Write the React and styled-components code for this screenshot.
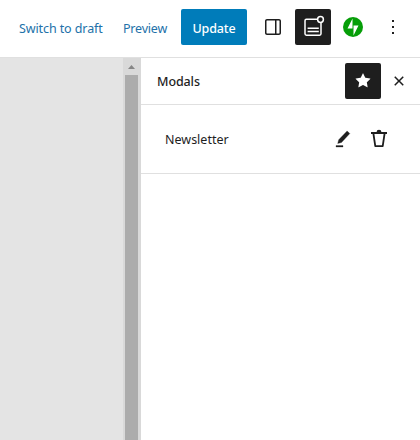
import React from 'react';
import styled, { createGlobalStyle } from 'styled-components';

const GlobalStyle = createGlobalStyle`
  * { box-sizing: border-box; }
  body {
    margin: 0;
    background: #fff;
    color: #1e1e1e;
    font-family: "Segoe UI", "Noto Sans", "Open Sans", sans-serif;
    font-size: 13px;
    overflow: hidden;
  }
`;

const Editor = styled.div`
  display: flex;
  flex-direction: column;
  width: 420px;
  height: 440px;
  overflow: hidden;
`;

const TopBar = styled.header`
  display: flex;
  align-items: center;
  flex: 0 0 58px;
  padding: 0 9px 3px 19px;
  border-bottom: 1px solid #e0e0e0;
`;

const LinkButton = styled.button`
  flex: none;
  width: ${(p) => p.$width}px;
  margin-right: ${(p) => p.$gap}px;
  padding: 3px 0 0;
  border: 0;
  background: none;
  color: #2271a9;
  font: 400 12.5px/20px "Segoe UI", "Noto Sans", sans-serif;
  letter-spacing: ${(p) => p.$tracking}px;
  text-align: left;
  white-space: nowrap;
`;

const PrimaryButton = styled.button`
  flex: none;
  width: 66px;
  height: 36px;
  margin-right: 8px;
  padding: 3px 0 0;
  border: 0;
  border-radius: 2px;
  background: #007cba;
  color: #fff;
  font: 500 12.5px/20px "Segoe UI", "Noto Sans", sans-serif;
  letter-spacing: -0.1px;
`;

const IconGroup = styled.div`
  display: flex;
  gap: ${(p) => p.$gap || 0}px;
`;

const IconButton = styled.button`
  display: flex;
  align-items: center;
  justify-content: center;
  flex: none;
  width: 36px;
  height: 36px;
  padding: 0;
  border: 0;
  border-radius: 2px;
  background: ${(p) => (p.$active ? '#1e1e1e' : 'transparent')};
  color: ${(p) => (p.$active ? '#fff' : '#1e1e1e')};
`;

const Glyph = styled.svg`
  display: block;
  width: 24px;
  height: 24px;
  fill: currentColor;
`;

const Workspace = styled.main`
  display: flex;
  flex: 1;
  min-height: 0;
`;

const Canvas = styled.div`
  flex: 0 0 123px;
  background: #e4e4e4;
`;

const Scrollbar = styled.div`
  display: flex;
  flex-direction: column;
  align-items: center;
  flex: 0 0 18px;
  padding-right: 1px;
  background: #d9d9d9;
`;

const ScrollArrow = styled.svg`
  flex: 0 0 17px;
  width: 17px;
  fill: #868686;
`;

const ScrollThumb = styled.div`
  flex: 1;
  width: 13px;
  background: #acacac;
`;

const Sidebar = styled.aside`
  flex: 1;
  background: #fff;
`;

const SidebarHeader = styled.div`
  display: flex;
  align-items: center;
  justify-content: space-between;
  height: 47px;
  padding: 0 3px 0 16px;
  border-bottom: 1px solid #e0e0e0;
`;

const Title = styled.h2`
  margin: 0;
  padding-top: 2px;
  font: 500 12.5px/20px "Segoe UI", "Noto Sans", sans-serif;
  letter-spacing: -0.1px;
`;

const ModalRow = styled.div`
  display: flex;
  align-items: center;
  justify-content: space-between;
  height: 69px;
  padding: 0 23px 0 24px;
  border-bottom: 1px solid #e0e0e0;
`;

const ModalName = styled.span`
  padding-top: 2px;
  font-size: 12.5px;
  line-height: 20px;
`;

const icons = {
  drawer:
    'M18 4H6c-1.1 0-2 .9-2 2v12c0 1.1.9 2 2 2h12c1.1 0 2-.9 2-2V6c0-1.1-.9-2-2-2zm-4 14.5H6c-.3 0-.5-.2-.5-.5V6c0-.3.2-.5.5-.5h8v13zm4.5-.5c0 .3-.2.5-.5.5h-2.5v-13H18c.3 0 .5.2.5.5v12z',
  more: 'M13 19h-2v-2h2v2zm0-6h-2v-2h2v2zm0-6h-2V5h2v2z',
  star: 'M11.776 4.454a.25.25 0 01.448 0l2.069 4.192a.25.25 0 00.188.137l4.626.672a.25.25 0 01.139.426l-3.348 3.263a.25.25 0 00-.072.222l.79 4.607a.25.25 0 01-.362.263l-4.138-2.175a.25.25 0 00-.232 0l-4.138 2.175a.25.25 0 01-.363-.263l.79-4.607a.25.25 0 00-.071-.222L4.754 9.881a.25.25 0 01.139-.426l4.626-.672a.25.25 0 00.188-.137l2.069-4.192z',
  close:
    'M12 13.06l3.712 3.713 1.061-1.06L13.061 12l3.712-3.712-1.06-1.06L12 10.938 8.288 7.227l-1.061 1.06L10.939 12l-3.712 3.712 1.06 1.061L12 13.061z',
};

const Icon = ({ name }) => (
  <Glyph viewBox="0 0 24 24" aria-hidden="true">
    <path d={icons[name]} />
  </Glyph>
);

const EditIcon = () => (
  <Glyph viewBox="0 0 24 24" aria-hidden="true">
    <path
      d="m18.8 6.6-2.7-2.7-8.4 8.8-1 3.8 3.8-1zM5 18.6h7V20H5z"
      stroke="currentColor"
      strokeWidth="0.3"
    />
  </Glyph>
);

const TrashIcon = () => (
  <Glyph viewBox="0 0 24 24" aria-hidden="true">
    <path d="M4 4.9h5.6a2.4 2.1 0 0 1 4.8 0H20V7H4z" />
    <path
      d="m6.4 6.5 1.8 12.2q.1.5.7.5h6.2q.6 0 .7-.5l1.8-12.2"
      fill="none"
      stroke="currentColor"
      strokeWidth="1.8"
    />
  </Glyph>
);

const ModalIcon = () => (
  <Glyph viewBox="0 0 24 24" aria-hidden="true">
    <g fill="none" stroke="currentColor" strokeWidth="1.5">
      <path d="M16.2 4.3H5.4Q4 4.3 4 5.7v13.1q0 1.4 1.4 1.4h13.2q1.4 0 1.4-1.4V8" />
      <path d="M6.6 13.3h11.2M6.6 16.5h11.2" />
      <circle cx="19.5" cy="4.5" r="2.9" />
    </g>
  </Glyph>
);

const JetpackIcon = () => (
  <Glyph viewBox="0 0 24 24" aria-hidden="true">
    <circle cx="12" cy="12" r="10" fill="#069e08" />
    <path d="M11.5 3.6v10H6.5zM12.5 20.4v-10h5z" fill="#fff" />
  </Glyph>
);

export default function App() {
  return (
    <>
      <GlobalStyle />
      <Editor>
        <TopBar>
          <LinkButton $width={84} $gap={20} $tracking={-0.1}>Switch to draft</LinkButton>
          <LinkButton $width={44} $gap={14} $tracking={-0.2}>Preview</LinkButton>
          <PrimaryButton>Update</PrimaryButton>
          <IconGroup $gap={4}>
            <IconButton aria-label="Settings"><Icon name="drawer" /></IconButton>
            <IconButton $active aria-label="Modals"><ModalIcon /></IconButton>
            <IconButton aria-label="Jetpack"><JetpackIcon /></IconButton>
            <IconButton aria-label="Options"><Icon name="more" /></IconButton>
          </IconGroup>
        </TopBar>
        <Workspace>
          <Canvas />
          <Scrollbar>
            <ScrollArrow viewBox="0 0 17 17" aria-hidden="true">
              <path d="M5 11 8.5 7 12 11z" />
            </ScrollArrow>
            <ScrollThumb />
          </Scrollbar>
          <Sidebar>
            <SidebarHeader>
              <Title>Modals</Title>
              <IconGroup>
                <IconButton $active aria-label="Pin"><Icon name="star" /></IconButton>
                <IconButton aria-label="Close"><Icon name="close" /></IconButton>
              </IconGroup>
            </SidebarHeader>
            <ModalRow>
              <ModalName>Newsletter</ModalName>
              <IconGroup>
                <IconButton aria-label="Edit"><EditIcon /></IconButton>
                <IconButton aria-label="Delete"><TrashIcon /></IconButton>
              </IconGroup>
            </ModalRow>
          </Sidebar>
        </Workspace>
      </Editor>
    </>
  );
}
